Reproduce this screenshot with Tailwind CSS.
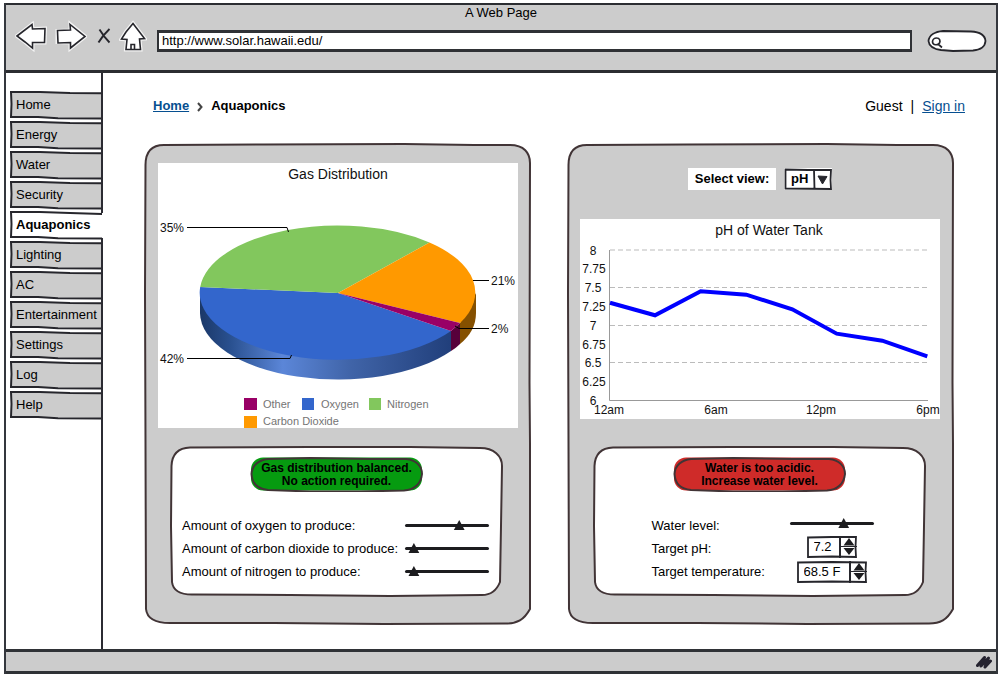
<!DOCTYPE html>
<html lang="en">
<head>
<meta charset="utf-8">
<meta name="viewport" content="width=device-width, initial-scale=1">
<title>A Web Page</title>
<script src="https://cdn.jsdelivr.net/npm/@tailwindcss/browser@4"></script>
</head>
<body class="flex min-h-screen flex-col bg-white pt-[3px] pr-[2px] pb-[3px] pl-1 font-['Liberation_Sans',Arial,sans-serif] text-[13px] leading-4 text-black">

<!-- Shared hand-drawn outlines -->
<svg class="hidden" aria-hidden="true">
  <symbol id="tab" viewBox="0 0 91 30" preserveAspectRatio="none">
    <path d="M1 2 L91 3 V28 L40 27.500 L1 27Z" fill="#ccc"/>
    <path d="M91 3.200 L60 3 L30 2 L1 2 L1.500 14 L1 27 L28 27 L48 28.300 L91 28.500" fill="none" stroke="#26262c" stroke-width="2"/>
  </symbol>
  <symbol id="panel" viewBox="0 0 387 482" preserveAspectRatio="none">
    <path d="M1.500 22 C1.500 8 8 2 20 2 L120 1.500 L260 1 L330 2 L366 2 C380 2 386 10 386 20 L385.500 240 L386 300 L386 466 C380 477 373 480.500 362 480.500 L240 481 L130 480 L26 480 C12 480 3 476 2 466 L1.500 300 L1 150Z" fill="#ccc" stroke="#413436" stroke-width="2"/>
  </symbol>
  <symbol id="box" viewBox="0 0 333 151" preserveAspectRatio="none">
    <path d="M1.500 20 C2 8 8 2 20 1.500 L140 1 L240 1 L310 2 C324 2 332 10 332 20 L331 80 L330 136 C326 146 320 149 312 149 L220 150 L120 149 L24 148.500 C10 149 3 144 2 136 L1 80Z" fill="#fff" stroke="#413436" stroke-width="2"/>
  </symbol>
  <symbol id="pill" viewBox="0 0 173 35" preserveAspectRatio="none">
    <rect x="1" y="0.500" width="171" height="33" rx="12" fill="currentColor"/>
    <path d="M1.500 17 C2 8 9 3 18 2 L60 1 L120 2 L156 2 C166 3 172 9 172 17 C171 27 164 33 154 33.500 L110 34.500 L60 34.500 L18 33 C7 32 2 26 1.500 17Z" fill="none" stroke="#413436" stroke-width="2"/>
  </symbol>
  <symbol id="spin" viewBox="0 0 50 22" preserveAspectRatio="none">
    <path d="M1 1.500 L25 1 L49 1 L48.500 11 L49 21 L25 20.500 L1 21Z" fill="#fff" stroke="#26262c" stroke-width="1.800"/>
  </symbol>
</svg>

<div class="flex flex-1 flex-col border-x-2 border-[#34373d]">
  <header class="border-t-2 border-b-[3px] border-[#2b2d31] bg-[#ccc]">
    <h1 class="text-center leading-[15px]">A Web Page</h1>
    <div class="flex h-[50px] items-start gap-2 pr-[9px] pl-[9px]">
      <button type="button" aria-label="Back" class="h-[42px] w-8 shrink-0">
        <svg viewBox="0 0 32 42" class="h-full w-full"><path d="M2 16 L17 4.500 L17.500 9 L30 8.500 L29.500 22.500 L17.500 22.500 L17.500 28 L10 22Z" fill="#fff" stroke="#f4f4f4" stroke-width="4"/><path d="M2 16 L17 4.500 L17.500 9 L30 8.500 L29.500 22.500 L17.500 22.500 L17.500 28 L10 22Z" fill="#fff" stroke="#26262c" stroke-width="1.600"/></svg>
      </button>
      <button type="button" aria-label="Forward" class="h-[42px] w-8 shrink-0">
        <svg viewBox="0 0 32 42" class="h-full w-full"><path d="M2.500 11 L15.500 10.500 L15.500 4.500 L30 16.500 L15.500 28 L15.500 22.500 L2.500 22Z" fill="#fff" stroke="#f4f4f4" stroke-width="4"/><path d="M2.500 10.500 L15.500 10 L15 4.500 L30 16.500 L15.500 28 L15.500 22.500 L3 23Z" fill="#fff" stroke="#26262c" stroke-width="1.600"/></svg>
      </button>
      <button type="button" aria-label="Stop" class="h-[42px] w-4 shrink-0">
        <svg viewBox="0 0 16 42" class="h-full w-full"><path d="M4.500 9.500 Q9 17 14.500 22.500 M14.500 9 Q8 15 3.500 22.500" fill="none" stroke="#26262c" stroke-width="1.900"/></svg>
      </button>
      <button type="button" aria-label="Home page" class="h-[42px] w-7 shrink-0">
        <svg viewBox="0 0 28 42" class="h-full w-full"><path d="M14 3.500 L25.500 18.500 L20.500 19 L21.500 29.500 L7 29.500 L8 19.500 L2.500 19 L7 12Z" fill="#fff" stroke="#f4f4f4" stroke-width="4"/><path d="M14 3.500 L25.500 18.500 L20.500 19 L21.500 29.500 L7 29.500 L8 19.500 L2.500 19 L7 12Z M12 29 V24.500 H15.500 V29" fill="#fff" stroke="#26262c" stroke-width="1.600"/></svg>
      </button>
      <input type="text" aria-label="Address" value="http://www.solar.hawaii.edu/" class="mt-[10px] ml-[2px] h-[22px] min-w-0 flex-1 border-x-2 border-y-[3px] border-[#2f3135] bg-white pr-1 pb-px pl-[3px] outline-none">
      <div class="relative mt-[10px] ml-[7px] h-[22px] w-[60px] shrink-0">
        <svg viewBox="0 0 60 22" class="absolute inset-0 h-full w-full" aria-hidden="true">
          <path d="M1.500 11 C2 5 8 1.500 16 1 L44 1.500 C53 2 58 5 58.500 11 C58 17 53 20 46 20.500 L26 21 L14 20 C6 19 2 16 1.500 11Z" fill="#fff" stroke="#26262c" stroke-width="1.800"/>
          <path d="M9.500 8 C13 8 13.500 11 12.500 13 C11 15.500 6 15.500 5.500 12 C5.500 9.500 7.500 8 9.500 8Z M11 14 L15 17.500" fill="none" stroke="#26262c" stroke-width="1.700"/>
        </svg>
        <input type="search" aria-label="Search" class="absolute inset-y-1 right-2 left-4 bg-transparent text-xs outline-none">
      </div>
    </div>
  </header>

  <div class="flex flex-1">
    <nav aria-label="Main" class="w-[97px] shrink-0 border-r-2 border-[#2b2b32] pt-[17px] pl-1">
      <ul>
        <li><a href="#" class="relative isolate flex h-[30px] items-center pl-1.5"><svg class="absolute inset-0 -z-10 h-full w-full"><use href="#tab"/></svg>Home</a></li>
        <li><a href="#" class="relative isolate flex h-[30px] items-center pl-1.5"><svg class="absolute inset-0 -z-10 h-full w-full"><use href="#tab"/></svg>Energy</a></li>
        <li><a href="#" class="relative isolate flex h-[30px] items-center pl-1.5"><svg class="absolute inset-0 -z-10 h-full w-full"><use href="#tab"/></svg>Water</a></li>
        <li><a href="#" class="relative isolate flex h-[30px] items-center pl-1.5"><svg class="absolute inset-0 -z-10 h-full w-full"><use href="#tab"/></svg>Security</a></li>
        <li><a href="#" aria-current="page" class="relative isolate -mr-[3px] flex h-[30px] items-center pl-1.5 font-bold"><svg viewBox="0 0 94 30" preserveAspectRatio="none" class="absolute inset-0 -z-10 h-full w-full"><path d="M1 2 L94 3 V28 L1 27Z" fill="#fff"/><path d="M92 4 L60 3 L30 2 L1 2 L1.500 14 L1 27 L28 27 L48 28.300 L92 28.500" fill="none" stroke="#26262c" stroke-width="2"/></svg>Aquaponics</a></li>
        <li><a href="#" class="relative isolate flex h-[30px] items-center pl-1.5"><svg class="absolute inset-0 -z-10 h-full w-full"><use href="#tab"/></svg>Lighting</a></li>
        <li><a href="#" class="relative isolate flex h-[30px] items-center pl-1.5"><svg class="absolute inset-0 -z-10 h-full w-full"><use href="#tab"/></svg>AC</a></li>
        <li><a href="#" class="relative isolate flex h-[30px] items-center pl-1.5"><svg class="absolute inset-0 -z-10 h-full w-full"><use href="#tab"/></svg>Entertainment</a></li>
        <li><a href="#" class="relative isolate flex h-[30px] items-center pl-1.5"><svg class="absolute inset-0 -z-10 h-full w-full"><use href="#tab"/></svg>Settings</a></li>
        <li><a href="#" class="relative isolate flex h-[30px] items-center pl-1.5"><svg class="absolute inset-0 -z-10 h-full w-full"><use href="#tab"/></svg>Log</a></li>
        <li><a href="#" class="relative isolate flex h-[30px] items-center pl-1.5"><svg class="absolute inset-0 -z-10 h-full w-full"><use href="#tab"/></svg>Help</a></li>
      </ul>
    </nav>

    <main class="min-w-0 flex-1 pt-[17px] pr-[42px] pb-6 pl-[41px]">
      <div class="flex h-8 items-center justify-between">
        <nav aria-label="Breadcrumb" class="flex items-center gap-2 pl-[9px] font-bold">
          <a href="#" class="text-[#064f90] underline">Home</a>
          <svg viewBox="0 0 6 10" class="mt-[2px] h-[10px] w-[6px]" aria-hidden="true"><path d="M1 1 L4.500 5 L1 9" fill="none" stroke="#444" stroke-width="2"/></svg>
          <span>Aquaponics</span>
        </nav>
        <div class="-mr-[11px] flex gap-2 text-sm">
          <span>Guest</span><span>|</span><a href="#" class="text-[#064f90] underline">Sign in</a>
        </div>
      </div>

      <div class="mt-[21px] grid grid-cols-2 gap-9">
        <section aria-label="Gas distribution" class="relative isolate flex flex-col pt-5 pr-[13px] pb-7 pl-[14px]">
          <svg class="absolute inset-0 -z-10 h-full w-full" aria-hidden="true"><use href="#panel"/></svg>
          <svg viewBox="0 0 360 265" class="h-auto w-full bg-white" role="img" aria-label="Gas Distribution pie chart">
            <defs>
              <linearGradient id="blueSide"><stop offset="0" stop-color="#1b3868"/><stop offset=".12" stop-color="#29508f"/><stop offset=".33" stop-color="#5b86d8"/><stop offset=".6" stop-color="#4064a8"/><stop offset="1" stop-color="#213f7b"/></linearGradient>
            </defs>
            <path d="M42 130 V150 A138 67 0 0 0 293 188 V168Z" fill="url(#blueSide)"/>
            <path d="M293 168 V188 Q298 185 302 181 V160Z" fill="#57003b"/>
            <path d="M302 160 V181 Q318 168 318 150 V130Z" fill="#855000"/>
            <path d="M180 130 L293 168 A138 67 0 0 1 42.200 124Z" fill="#3366cc"/>
            <path d="M180 130 L42.200 124 A138 67 0 0 1 271.500 79.500Z" fill="#82c75d"/>
            <path d="M180 130 L271.500 79.500 A138 67 0 0 1 302 160Z" fill="#ff9900"/>
            <path d="M180 130 L302 160 L293 168Z" fill="#990066"/>
            <path d="M29 64.500 H129 L130.500 69 M29 195.500 H132 L133.500 192 M315 117.500 H331 M297 163 L301 165.500 H331" fill="none" stroke="#000"/>
            <g font-size="12" fill="#111">
              <text x="2" y="69">35%</text><text x="2" y="200">42%</text><text x="333" y="122">21%</text><text x="333" y="170">2%</text>
            </g>
            <text x="180" y="16" font-size="14" text-anchor="middle" fill="#111">Gas Distribution</text>
            <g font-size="11" fill="#757575">
              <rect x="86" y="235" width="13" height="12" fill="#990066"/><text x="105" y="245">Other</text>
              <rect x="144" y="235" width="12" height="12" fill="#3366cc"/><text x="163" y="245">Oxygen</text>
              <rect x="211" y="235" width="12" height="12" fill="#82c75d"/><text x="229" y="245">Nitrogen</text>
              <rect x="86" y="253" width="13" height="12" fill="#ff9900"/><text x="105" y="262">Carbon Dioxide</text>
            </g>
          </svg>
          <div class="relative isolate mt-[18px] mr-[15px] ml-3 flex flex-col items-center pt-[11px] pb-[14px]">
            <svg class="absolute inset-0 -z-10 h-full w-full" aria-hidden="true"><use href="#box"/></svg>
            <p role="status" class="relative isolate flex h-[35px] w-[173px] items-center justify-center text-center text-xs leading-[13px] font-bold">
              <svg class="absolute inset-0 -z-10 h-full w-full text-[#069b10]" aria-hidden="true"><use href="#pill"/></svg>
              <span>Gas distribution balanced.<br>No action required.</span>
            </p>
            <form class="mt-[22px] w-full pr-[14px] pl-3">
              <div class="flex h-[23px] items-center justify-between"><label for="o2">Amount of oxygen to produce:</label>
                <input id="o2" type="range" min="0" max="100" value="67" class="h-3 w-[84px] shrink-0 appearance-none bg-transparent [&::-webkit-slider-runnable-track]:h-[3px] [&::-webkit-slider-runnable-track]:rounded-full [&::-webkit-slider-runnable-track]:bg-[#1c1c1f] [&::-webkit-slider-thumb]:-mt-1 [&::-webkit-slider-thumb]:h-[10px] [&::-webkit-slider-thumb]:w-3 [&::-webkit-slider-thumb]:appearance-none [&::-webkit-slider-thumb]:bg-[#1c1c1f] [&::-webkit-slider-thumb]:[clip-path:polygon(50%_0,95%_100%,5%_100%)]"></div>
              <div class="flex h-[23px] items-center justify-between"><label for="co2">Amount of carbon dioxide to produce:</label>
                <input id="co2" type="range" min="0" max="100" value="4" class="h-3 w-[84px] shrink-0 appearance-none bg-transparent [&::-webkit-slider-runnable-track]:h-[3px] [&::-webkit-slider-runnable-track]:rounded-full [&::-webkit-slider-runnable-track]:bg-[#1c1c1f] [&::-webkit-slider-thumb]:-mt-1 [&::-webkit-slider-thumb]:h-[10px] [&::-webkit-slider-thumb]:w-3 [&::-webkit-slider-thumb]:appearance-none [&::-webkit-slider-thumb]:bg-[#1c1c1f] [&::-webkit-slider-thumb]:[clip-path:polygon(50%_0,95%_100%,5%_100%)]"></div>
              <div class="flex h-[23px] items-center justify-between"><label for="n2">Amount of nitrogen to produce:</label>
                <input id="n2" type="range" min="0" max="100" value="4" class="h-3 w-[84px] shrink-0 appearance-none bg-transparent [&::-webkit-slider-runnable-track]:h-[3px] [&::-webkit-slider-runnable-track]:rounded-full [&::-webkit-slider-runnable-track]:bg-[#1c1c1f] [&::-webkit-slider-thumb]:-mt-1 [&::-webkit-slider-thumb]:h-[10px] [&::-webkit-slider-thumb]:w-3 [&::-webkit-slider-thumb]:appearance-none [&::-webkit-slider-thumb]:bg-[#1c1c1f] [&::-webkit-slider-thumb]:[clip-path:polygon(50%_0,95%_100%,5%_100%)]"></div>
            </form>
          </div>
        </section>

        <section aria-label="Water tank" class="relative isolate flex flex-col pt-[25px] pr-[14px] pb-7 pl-[13px]">
          <svg class="absolute inset-0 -z-10 h-full w-full" aria-hidden="true"><use href="#panel"/></svg>
          <div class="flex h-[22px] justify-center gap-2">
            <label for="view" class="flex w-[88px] items-center justify-center bg-white font-bold">Select view:</label>
            <div class="relative isolate w-[48px]">
              <svg viewBox="0 0 48 22" class="absolute inset-0 -z-10 h-full w-full bg-white" aria-hidden="true"><path d="M1.500 1.500 L24 2 L47 2 L46.500 12 L47 21 L1.500 20.500Z M30 2 L30.500 21" fill="none" stroke="#26262c" stroke-width="1.800"/><path d="M34 8 L43 8.500 L38.500 16Z" fill="#26262c" stroke="#26262c" stroke-linejoin="round"/></svg>
              <select id="view" class="h-full w-full appearance-none bg-transparent pl-[7px] font-bold outline-none"><option>pH</option></select>
            </div>
          </div>
          <svg viewBox="0 0 360 200" class="mt-[29px] h-auto w-full bg-white" role="img" aria-label="pH of Water Tank line chart">
            <path d="M30 31 H348 M30 68.500 H348 M30 106.500 H348 M30 143.500 H348" stroke="#bbb" stroke-dasharray="5 3" fill="none"/>
            <path d="M29.500 31 V181.500 H348" stroke="#999" fill="none"/>
            <path d="M30 83.700 L75 96.300 L120.700 72.300 L166.300 75.700 L212.300 90.300 L256.700 114.700 L302.300 121.700 L347.300 137.300" fill="none" stroke="#00f" stroke-width="4"/>
            <text x="189" y="16" font-size="14" text-anchor="middle" fill="#111">pH of Water Tank</text>
            <g font-size="12" text-anchor="middle" fill="#111">
              <text x="13" y="36">8</text><text x="14" y="54">7.75</text><text x="13" y="73">7.5</text><text x="14" y="92">7.25</text><text x="13" y="111">7</text><text x="14" y="130">6.75</text><text x="13" y="148">6.5</text><text x="14" y="167">6.25</text><text x="13" y="186">6</text>
              <text x="29" y="195">12am</text><text x="136" y="195">6am</text><text x="241" y="195">12pm</text><text x="348" y="195">6pm</text>
            </g>
          </svg>
          <div class="relative isolate mt-[27px] mr-[14px] ml-[13px] flex flex-col items-center pt-[11px] pb-[14px]">
            <svg class="absolute inset-0 -z-10 h-full w-full" aria-hidden="true"><use href="#box"/></svg>
            <p role="status" class="relative isolate flex h-[35px] w-[173px] items-center justify-center text-center text-xs leading-[13px] font-bold">
              <svg class="absolute inset-0 -z-10 h-full w-full text-[#cf2b29]" aria-hidden="true"><use href="#pill"/></svg>
              <span>Water is too acidic.<br>Increase water level.</span>
            </p>
            <form class="mt-[22px] ml-[6px] w-[222px]">
              <div class="flex h-[23px] items-center justify-between"><label for="level">Water level:</label>
                <input id="level" type="range" min="0" max="100" value="67" class="mb-1 h-3 w-[84px] shrink-0 appearance-none bg-transparent [&::-webkit-slider-runnable-track]:h-[3px] [&::-webkit-slider-runnable-track]:rounded-full [&::-webkit-slider-runnable-track]:bg-[#1c1c1f] [&::-webkit-slider-thumb]:-mt-1 [&::-webkit-slider-thumb]:h-[10px] [&::-webkit-slider-thumb]:w-3 [&::-webkit-slider-thumb]:appearance-none [&::-webkit-slider-thumb]:bg-[#1c1c1f] [&::-webkit-slider-thumb]:[clip-path:polygon(50%_0,95%_100%,5%_100%)]"></div>
              <div class="flex h-[23px] items-center justify-between"><label for="ph">Target pH:</label>
                <div class="mb-1 flex w-[84px] justify-center"><div class="relative isolate flex h-[22px] w-[50px]">
                  <svg class="absolute inset-0 -z-10 h-full w-full" aria-hidden="true"><use href="#spin"/></svg>
                  <input id="ph" type="text" inputmode="decimal" value="7.2" class="w-0 flex-1 bg-transparent pl-[7px] outline-none">
                  <div class="flex w-[18px] flex-col border-l-2 border-[#26262c]">
                    <button type="button" aria-label="Increase pH" class="flex flex-1 items-end justify-center border-b border-[#26262c]"><svg viewBox="0 0 12 8" class="h-2 w-3"><path d="M6 0 L11.500 7.500 H0.500Z" fill="#1c1c1f"/></svg></button>
                    <button type="button" aria-label="Decrease pH" class="flex flex-1 items-start justify-center"><svg viewBox="0 0 12 8" class="h-2 w-3"><path d="M0.500 1 H11.500 L6 8Z" fill="#1c1c1f"/></svg></button>
                  </div>
                </div></div></div>
              <div class="flex h-[23px] items-center justify-between"><label for="temp">Target temperature:</label>
                <div class="flex w-[84px] justify-center"><div class="relative isolate flex h-[22px] w-[70px]">
                  <svg viewBox="0 0 70 22" preserveAspectRatio="none" class="absolute inset-0 -z-10 h-full w-full" aria-hidden="true"><path d="M1 1.500 L35 1 L69 1.500 L68.500 11 L69 21 L35 20.500 L1 21Z" fill="#fff" stroke="#26262c" stroke-width="1.800"/></svg>
                  <input id="temp" type="text" value="68.5 F" class="w-0 flex-1 bg-transparent pl-[7px] outline-none">
                  <div class="flex w-[18px] flex-col border-l-2 border-[#26262c]">
                    <button type="button" aria-label="Increase temperature" class="flex flex-1 items-end justify-center border-b border-[#26262c]"><svg viewBox="0 0 12 8" class="h-2 w-3"><path d="M6 0 L11.500 7.500 H0.500Z" fill="#1c1c1f"/></svg></button>
                    <button type="button" aria-label="Decrease temperature" class="flex flex-1 items-start justify-center"><svg viewBox="0 0 12 8" class="h-2 w-3"><path d="M0.500 1 H11.500 L6 8Z" fill="#1c1c1f"/></svg></button>
                  </div>
                </div></div></div>
            </form>
          </div>
        </section>
      </div>
    </main>
  </div>

  <footer class="flex h-[25px] items-center justify-end border-t-[3px] border-b-[3px] border-[#2f3236] bg-[#ccc] pr-1">
    <svg viewBox="0 0 16 14" class="h-[14px] w-4" aria-hidden="true"><path d="M1.500 10.500 L8.500 2.500 L5 11 L12.500 3 L9 12 L14.500 6" fill="none" stroke="#24222f" stroke-width="3" stroke-linejoin="round" stroke-linecap="round"/></svg>
  </footer>
</div>
</body>
</html>
